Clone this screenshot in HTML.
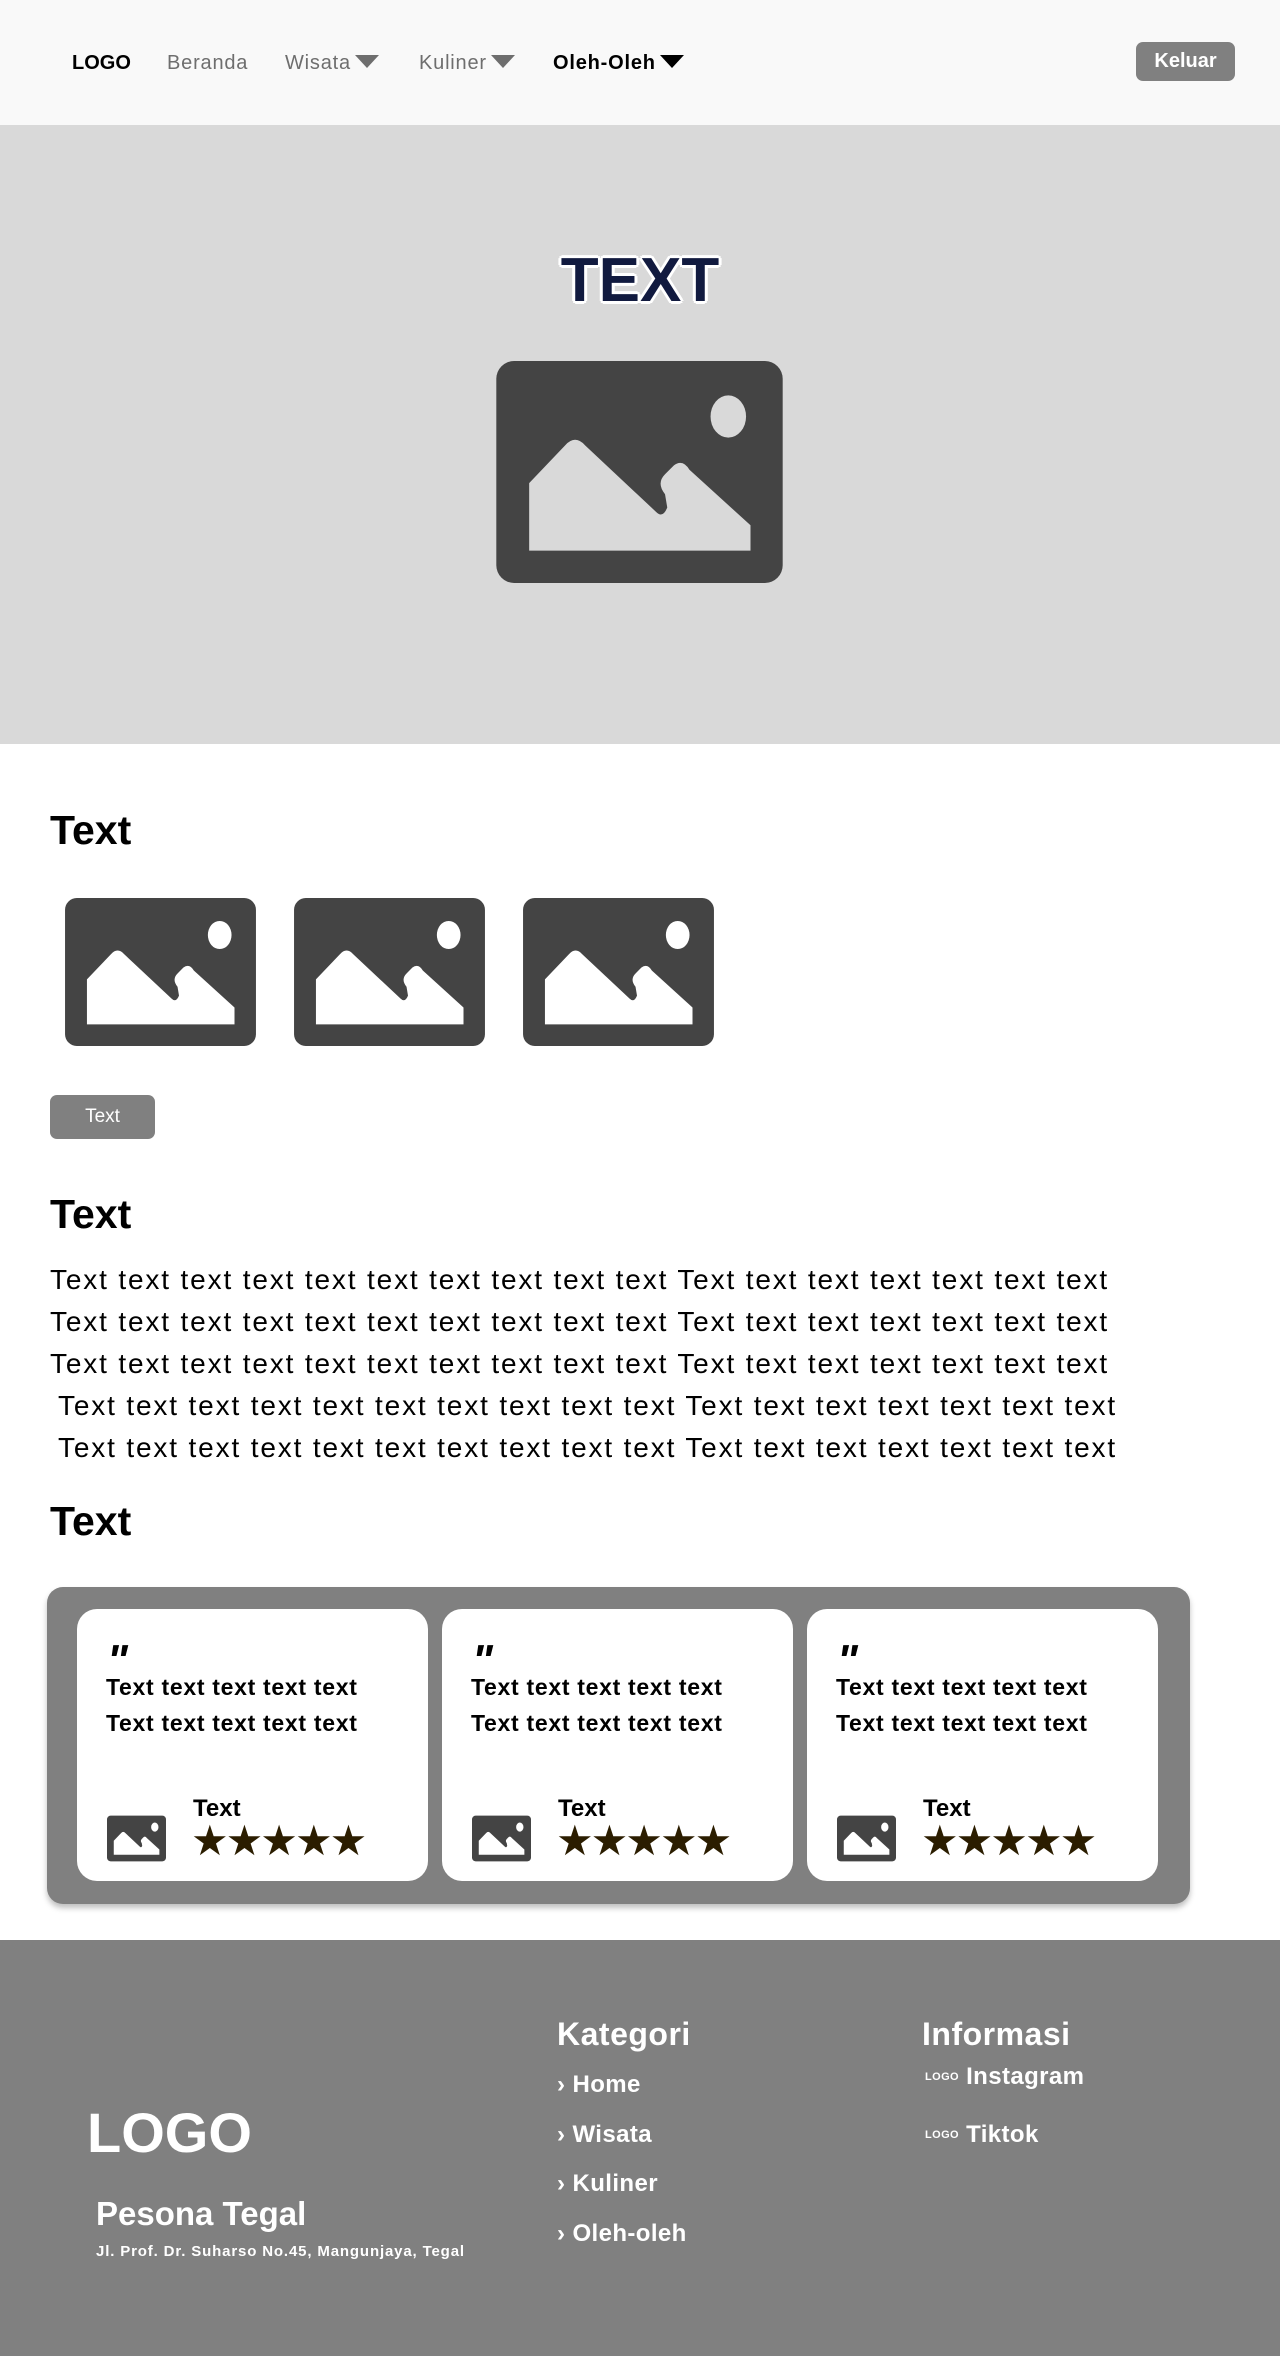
<!DOCTYPE html>
<html><head><meta charset="utf-8">
<style>
*{margin:0;padding:0;box-sizing:border-box}
body{width:1280px;height:2356px;position:relative;background:#fff;font-family:"Liberation Sans",sans-serif;overflow:hidden}
.a{position:absolute;white-space:pre}
.nav{position:absolute;left:0;top:0;width:1280px;height:125px;background:#f9f9f9}
.nl{position:absolute;top:51px;font-size:20px;line-height:24px;letter-spacing:0.8px}
.tri{display:inline-block;width:0;height:0;border-left:12px solid transparent;border-right:12px solid transparent;border-top:13px solid #6e6e6e;margin-left:4px;vertical-align:1px}
.hero{position:absolute;left:0;top:125px;width:1280px;height:619px;background:#d9d9d9}
h2{position:absolute;left:50px;font-size:41px;font-weight:bold;line-height:48px}
.p{position:absolute;left:50px;font-size:28px;line-height:42px;letter-spacing:1.85px;white-space:pre;color:#000}
.box{position:absolute;left:47px;top:1587px;width:1143px;height:317px;background:#808080;border-radius:16px;box-shadow:0 4px 6px rgba(0,0,0,.25)}
.card{position:absolute;top:22px;width:351px;height:272px;background:#fff;border-radius:20px}
.q{position:absolute;left:30px;top:30px;font-size:44px;font-weight:bold;font-style:italic;line-height:44px;letter-spacing:-4px}
.ct{position:absolute;left:29px;top:60px;font-size:23px;font-weight:bold;line-height:36px;white-space:pre;letter-spacing:0.7px}
.nm{position:absolute;left:116px;top:186px;font-size:24px;font-weight:bold}
.st{position:absolute;left:114px;top:210px;font-size:42px;line-height:44px;color:#2b1d00;letter-spacing:-3px}
.av{position:absolute;left:30px;top:206px}
.foot{position:absolute;left:0;top:1940px;width:1280px;height:416px;background:#808080;color:#fff}
.fi{position:absolute;left:557px;font-size:24px;font-weight:bold;letter-spacing:0.4px}
</style></head><body>
<div class="nav">
 <div class="nl" style="left:72px;font-weight:bold;color:#000;letter-spacing:0">LOGO</div>
 <div class="nl" style="left:167px;color:#6e6e6e">Beranda</div>
 <div class="nl" style="left:285px;color:#6e6e6e">Wisata<span class="tri"></span></div>
 <div class="nl" style="left:419px;color:#6e6e6e">Kuliner<span class="tri"></span></div>
 <div class="nl" style="left:553px;color:#000;font-weight:bold">Oleh-Oleh<span class="tri" style="border-top-color:#000"></span></div>
 <div class="a" style="left:1136px;top:42px;width:99px;height:39px;background:#808080;border-radius:7px;color:#fff;font-size:20px;font-weight:bold;text-align:center;line-height:39px">Keluar</div>
</div>
<div class="hero">
 <div class="a" style="left:0;width:1280px;top:120px;text-align:center;font-size:62px;font-weight:bold;color:#111a3f;line-height:72px;text-shadow:3px 0 #fff,-3px 0 #fff,0 3px #fff,0 -3px #fff,2px 2px #fff,-2px -2px #fff,2px -2px #fff,-2px 2px #fff">TEXT</div>
 <svg class="a" style="left:496px;top:236px" width="287" height="222" viewBox="0 0 129 100"><rect width="129" height="100" rx="8" fill="#444"/><path d="M14.8,85.4 V55 L31,38 Q35.5,33 40,38 L72,68 Q75,71 77,66 L76,60 Q72,55 76,51 L80,47 Q84,44 87,49 L114.5,74 V85.4 Z" fill="#d9d9d9"/><ellipse cx="104.5" cy="25" rx="8" ry="9.5" fill="#d9d9d9"/></svg>
</div>
<h2 style="top:806px">Text</h2>
<svg class="a" style="left:65px;top:898px" width="191" height="148" viewBox="0 0 129 100"><rect width="129" height="100" rx="8" fill="#444"/><path d="M14.8,85.4 V55 L31,38 Q35.5,33 40,38 L72,68 Q75,71 77,66 L76,60 Q72,55 76,51 L80,47 Q84,44 87,49 L114.5,74 V85.4 Z" fill="#fff"/><ellipse cx="104.5" cy="25" rx="8" ry="9.5" fill="#fff"/></svg>
<svg class="a" style="left:294px;top:898px" width="191" height="148" viewBox="0 0 129 100"><rect width="129" height="100" rx="8" fill="#444"/><path d="M14.8,85.4 V55 L31,38 Q35.5,33 40,38 L72,68 Q75,71 77,66 L76,60 Q72,55 76,51 L80,47 Q84,44 87,49 L114.5,74 V85.4 Z" fill="#fff"/><ellipse cx="104.5" cy="25" rx="8" ry="9.5" fill="#fff"/></svg>
<svg class="a" style="left:523px;top:898px" width="191" height="148" viewBox="0 0 129 100"><rect width="129" height="100" rx="8" fill="#444"/><path d="M14.8,85.4 V55 L31,38 Q35.5,33 40,38 L72,68 Q75,71 77,66 L76,60 Q72,55 76,51 L80,47 Q84,44 87,49 L114.5,74 V85.4 Z" fill="#fff"/><ellipse cx="104.5" cy="25" rx="8" ry="9.5" fill="#fff"/></svg>
<div class="a" style="left:50px;top:1095px;width:105px;height:44px;background:#808080;border-radius:7px;color:#fff;font-size:19px;text-align:center;line-height:44px">Text</div>
<h2 style="top:1190px">Text</h2>
<div class="p" style="top:1259px">Text text text text text text text text text text Text text text text text text text</div>
<div class="p" style="top:1301px">Text text text text text text text text text text Text text text text text text text</div>
<div class="p" style="top:1343px">Text text text text text text text text text text Text text text text text text text</div>
<div class="p" style="top:1385px;left:58px">Text text text text text text text text text text Text text text text text text text</div>
<div class="p" style="top:1427px;left:58px">Text text text text text text text text text text Text text text text text text text</div>
<h2 style="top:1497px">Text</h2>
<div class="box">
 <div class="card" style="left:30px">
  <div class="q">"</div><div class="ct">Text text text text text
Text text text text text</div>
  <svg class="av" width="59" height="47" viewBox="0 0 129 100"><rect width="129" height="100" rx="8" fill="#444"/><path d="M14.8,85.4 V55 L31,38 Q35.5,33 40,38 L72,68 Q75,71 77,66 L76,60 Q72,55 76,51 L80,47 Q84,44 87,49 L114.5,74 V85.4 Z" fill="#fff"/><ellipse cx="104.5" cy="25" rx="8" ry="10" fill="#fff"/></svg>
  <div class="nm">Text</div><div class="st">★★★★★</div>
 </div>
 <div class="card" style="left:395px">
  <div class="q">"</div><div class="ct">Text text text text text
Text text text text text</div>
  <svg class="av" width="59" height="47" viewBox="0 0 129 100"><rect width="129" height="100" rx="8" fill="#444"/><path d="M14.8,85.4 V55 L31,38 Q35.5,33 40,38 L72,68 Q75,71 77,66 L76,60 Q72,55 76,51 L80,47 Q84,44 87,49 L114.5,74 V85.4 Z" fill="#fff"/><ellipse cx="104.5" cy="25" rx="8" ry="10" fill="#fff"/></svg>
  <div class="nm">Text</div><div class="st">★★★★★</div>
 </div>
 <div class="card" style="left:760px">
  <div class="q">"</div><div class="ct">Text text text text text
Text text text text text</div>
  <svg class="av" width="59" height="47" viewBox="0 0 129 100"><rect width="129" height="100" rx="8" fill="#444"/><path d="M14.8,85.4 V55 L31,38 Q35.5,33 40,38 L72,68 Q75,71 77,66 L76,60 Q72,55 76,51 L80,47 Q84,44 87,49 L114.5,74 V85.4 Z" fill="#fff"/><ellipse cx="104.5" cy="25" rx="8" ry="10" fill="#fff"/></svg>
  <div class="nm">Text</div><div class="st">★★★★★</div>
 </div>
</div>
<div class="foot">
 <div class="a" style="left:87px;top:160px;font-size:56px;font-weight:bold;line-height:66px">LOGO</div>
 <div class="a" style="left:96px;top:255px;font-size:33px;font-weight:bold">Pesona Tegal</div>
 <div class="a" style="left:96px;top:303px;font-size:15px;font-weight:bold;letter-spacing:0.85px">Jl. Prof. Dr. Suharso No.45, Mangunjaya, Tegal</div>
 <div class="a" style="left:557px;top:76px;font-size:32px;font-weight:bold;letter-spacing:0.5px">Kategori</div>
 <div class="fi a" style="top:131px">› Home</div>
 <div class="fi a" style="top:181px">› Wisata</div>
 <div class="fi a" style="top:230px">› Kuliner</div>
 <div class="fi a" style="top:280px">› Oleh-oleh</div>
 <div class="a" style="left:922px;top:76px;font-size:32px;font-weight:bold;letter-spacing:0.5px">Informasi</div>
 <div class="a" style="left:925px;top:123px;font-size:24px;font-weight:bold;letter-spacing:0.4px"><span style="font-size:11px;vertical-align:4px">LOGO</span> Instagram</div>
 <div class="a" style="left:925px;top:181px;font-size:24px;font-weight:bold;letter-spacing:0.4px"><span style="font-size:11px;vertical-align:4px">LOGO</span> Tiktok</div>
</div>
</body></html>
